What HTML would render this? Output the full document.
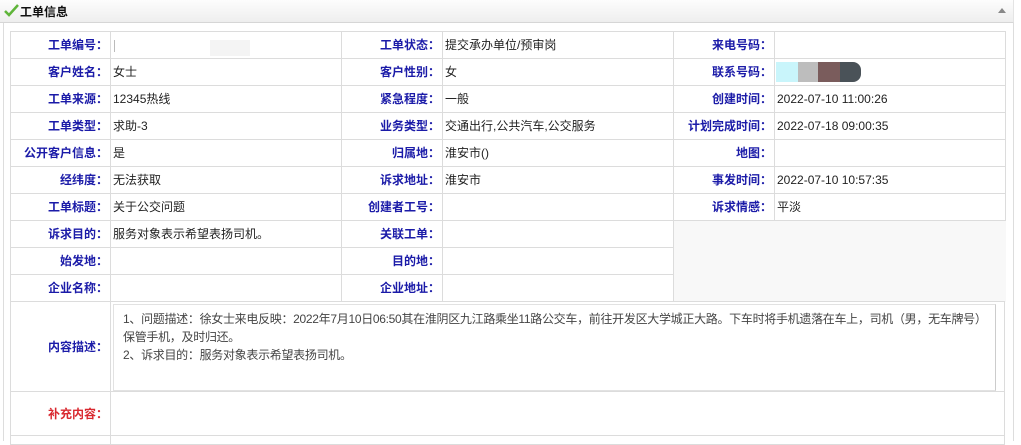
<!DOCTYPE html>
<html><head><meta charset="utf-8"><style>
*{margin:0;padding:0;box-sizing:border-box}
body{width:1021px;height:441px;overflow:hidden;background:#fff;font-family:"Liberation Sans","Noto Sans CJK SC",sans-serif;font-size:12px;position:relative}
.hd{position:absolute;left:0;top:0;width:1014px;height:23px;background:linear-gradient(#fdfdfd,#eeeeee);border-bottom:1px solid #d6d6d6;border-right:1px solid #e4e4e4}
.hd span{position:absolute;left:20px;top:3px;font-size:12px;font-weight:bold;color:#111}
.body{position:absolute;left:3px;top:23px;width:1011px;height:418px;background:#fff;border-left:1px solid #ddd;border-right:1px solid #ddd}
.c{position:absolute;border:1px solid #dcdcdc;margin:-1px 0 0 -1px;line-height:26px;white-space:nowrap;overflow:hidden;background:#fff}
.l{text-align:right;color:#1b1ba8;font-weight:bold;padding-right:2px}
.v{color:#222;padding-left:2px}
.gray{position:absolute;background:#f8f8f8}
</style></head><body>
<div class="hd"><svg style="position:absolute;left:4px;top:4px" width="15" height="13" viewBox="0 0 15 13"><path d="M1 7 L5 11 L14 1" stroke="#5fb53a" stroke-width="2.5" fill="none"/></svg><span>工单信息</span>
<svg style="position:absolute;left:998px;top:8px" width="8" height="5"><path d="M0 5 L4 0 L8 5Z" fill="#888"/></svg></div>
<div class="body"></div>
<div class="gray" style="left:674px;top:221px;width:332px;height:81px"></div>
<div id="t"></div>
<script>
var cols=[11,111,342,443,674,775,1006];
var rows=[
["工单编号：","","工单状态：","提交承办单位/预审岗","来电号码：",""],
["客户姓名：","女士","客户性别：","女","联系号码：",""],
["工单来源：","12345热线","紧急程度：","一般","创建时间：","2022-07-10 11:00:26"],
["工单类型：","求助-3","业务类型：","交通出行,公共汽车,公交服务","计划完成时间：","2022-07-18 09:00:35"],
["公开客户信息：","是","归属地：","淮安市()","地图：",""],
["经纬度：","无法获取","诉求地址：","淮安市","事发时间：","2022-07-10 10:57:35"],
["工单标题：","关于公交问题","创建者工号：","","诉求情感：","平淡"],
["诉求目的：","服务对象表示希望表扬司机。","关联工单：",""],
["始发地：","","目的地：",""],
["企业名称：","","企业地址：",""]];
var h="";
rows.forEach(function(r,i){var y=32+i*27;r.forEach(function(t,j){h+='<div class="c '+(j%2?'v':'l')+'" style="left:'+cols[j]+'px;top:'+y+'px;width:'+(cols[j+1]-cols[j]+1)+'px;height:28px">'+t+'</div>';});});
h+='<div class="c l" style="left:11px;top:302px;width:101px;height:91px;line-height:90px">内容描述：</div>';
h+='<div class="c" style="left:111px;top:302px;width:895px;height:91px"></div>';
h+='<div style="position:absolute;left:113px;top:304px;width:883px;height:87px;border:1px solid #e2e2e2;border-right-color:#ccc;color:#444;line-height:18px;padding:5px 4px 5px 9px;white-space:normal;font-size:12px;letter-spacing:-0.3px">1、问题描述：徐女士来电反映：2022年7月10日06:50其在淮阴区九江路乘坐11路公交车，前往开发区大学城正大路。下车时将手机遗落在车上，司机（男，无车牌号）保管手机，及时归还。<br>2、诉求目的：服务对象表示希望表扬司机。</div>';
h+='<div class="c l" style="left:11px;top:392px;width:101px;height:45px;line-height:44px;color:#d9282f">补充内容：</div>';
h+='<div class="c" style="left:111px;top:392px;width:895px;height:45px"></div>';
h+='<div class="c" style="left:11px;top:436px;width:101px;height:10px"></div><div class="c" style="left:111px;top:436px;width:895px;height:10px"></div>';
h+='<div style="position:absolute;left:776px;top:62px;width:22px;height:20px;background:#c9f5fb"></div><div style="position:absolute;left:798px;top:62px;width:20px;height:20px;background:#bdbdbd"></div><div style="position:absolute;left:818px;top:62px;width:22px;height:20px;background:#7a5c5c"></div><div style="position:absolute;left:840px;top:62px;width:21px;height:20px;background:#4a5258;border-radius:0 8px 8px 0"></div>';
h+='<div style="position:absolute;left:210px;top:40px;width:40px;height:16px;background:#f4f4f4"></div><div style="position:absolute;left:114px;top:40px;width:3px;height:12px;border-left:1px solid #bbb"></div>';
document.getElementById("t").innerHTML=h;
</script>
</body></html>
